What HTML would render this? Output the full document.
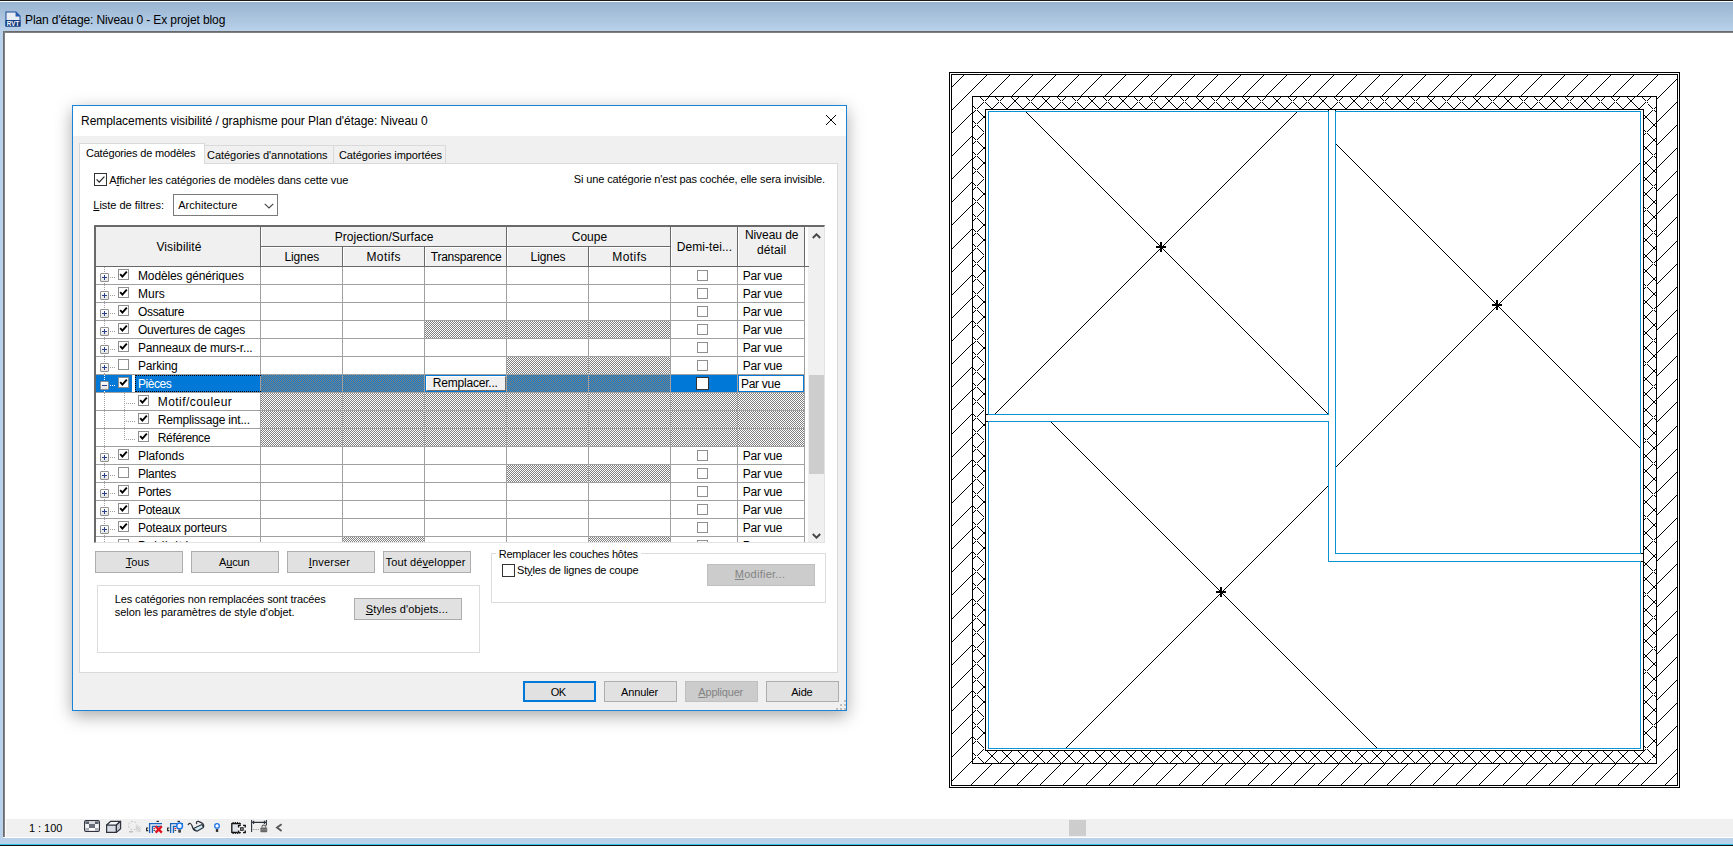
<!DOCTYPE html>
<html><head><meta charset="utf-8"><title>Revit</title>
<style>
html,body{margin:0;padding:0;}
body{width:1733px;height:848px;overflow:hidden;background:#fff;position:relative;font-family:'Liberation Sans',sans-serif;}
.a{position:absolute;box-sizing:border-box;}
.t{position:absolute;white-space:pre;}
.t u{text-decoration:underline;text-underline-offset:1px;text-decoration-thickness:1px;}
.hatch{background-image:conic-gradient(#808080 25%,#fff 0 50%,#808080 0 75%,#fff 0);background-size:2px 2px;}
.hatchb{background-image:conic-gradient(#8a8478 25%,#0078d7 0 50%,#8a8478 0 75%,#0078d7 0);background-size:2px 2px;}
.btn{position:absolute;box-sizing:border-box;background:#e1e1e1;border:1px solid #adadad;}
.btnd{position:absolute;box-sizing:border-box;background:#cccccc;border:1px solid #bfbfbf;}
</style></head><body>
<div class="a" style="left:0;top:0;width:1733px;height:1px;background:#1a1a1a"></div>
<div class="a" style="left:0;top:1px;width:1733px;height:1px;background:#fdfdfd"></div>
<div class="a" style="left:0;top:2px;width:1733px;height:29px;background:linear-gradient(#99b4d1,#b9d1ea)"></div>
<div class="a" style="left:0;top:31px;width:3px;height:813px;background:#b9d1ea"></div>
<div class="a" style="left:3px;top:31px;width:1730px;height:2px;background:linear-gradient(#5f5f5f,#8c8c8c)"></div>
<div class="a" style="left:3px;top:31px;width:2px;height:806px;background:linear-gradient(90deg,#606060,#8c8c8c)"></div>
<div class="a" style="left:6px;top:819px;width:1727px;height:18px;background:#f0f0f0"></div>
<div class="a" style="left:3px;top:837px;width:1730px;height:1px;background:#fff"></div>
<div class="a" style="left:0;top:838px;width:1733px;height:6px;background:#b9d1ea"></div>
<div class="a" style="left:0;top:844px;width:1733px;height:1px;background:#35c4e8"></div>
<div class="a" style="left:0;top:845px;width:1733px;height:1px;background:#111"></div>
<div class="a" style="left:1069px;top:820px;width:17px;height:16px;background:#cdcdcd"></div>
<svg class="a" style="left:5px;top:11px" width="16" height="16" viewBox="0 0 16 16">
<path d="M0.5 0.5 H11 L15.5 5 V15.5 H0.5 Z" fill="#1a4a94"/>
<path d="M1.5 1.5 H10.6 V5.6 H14.5 V9 H1.5 Z" fill="#e9eef6"/>
<path d="M11 0.5 L15.5 5 H11 Z" fill="#2a5db0"/>
<rect x="0.5" y="9.3" width="15" height="6.2" fill="#123a7c"/>
<text x="8" y="14.8" font-family="Liberation Sans" font-weight="bold" font-size="6.6" fill="#fff" text-anchor="middle" textLength="12.5" lengthAdjust="spacingAndGlyphs">RVT</text>
</svg>
<span class="t " style="left:25.00px;top:12px;font-size:12px;line-height:17px;letter-spacing:-0.108px;color:#000">Plan d&#x27;étage: Niveau 0 - Ex projet blog</span>
<span class="t " style="left:28.90px;top:821px;font-size:11px;line-height:15px;letter-spacing:-0.020px;color:#000">1 : 100</span>
<svg class="a" style="left:80px;top:817px" width="210" height="20" viewBox="80 817 210 20" fill="none">
<rect x="84.6" y="820.6" width="14.8" height="10.8" rx="1.4" fill="#fff" stroke="#2d323c" stroke-width="1.2"/>
<rect x="85.5" y="821.5" width="3.5" height="2.5" fill="#5a5f69"/>
<rect x="89" y="821.5" width="6" height="2.5" fill="#d9dbe0"/>
<rect x="95" y="821.5" width="3.5" height="2.5" fill="#5a5f69"/>
<rect x="85.5" y="824" width="3.5" height="4" fill="#f4f4f6"/>
<rect x="89" y="824" width="6" height="4" fill="#6a6f7a"/>
<rect x="95" y="824" width="3.5" height="4" fill="#f4f4f6"/>
<rect x="85.5" y="828" width="3.5" height="2.5" fill="#a9acb3"/>
<rect x="89" y="828" width="6" height="2.5" fill="#ffffff"/>
<rect x="95" y="828" width="3.5" height="2.5" fill="#a9acb3"/>
<path d="M106.6 825H116.4V832.4H106.6Z" fill="#d9dde5" stroke="#2d323c" stroke-width="1.2" stroke-linejoin="round"/>
<path d="M106.6 825L110.8 821.3H120.6L116.4 825Z" fill="#f6f7f9" stroke="#2d323c" stroke-width="1.2" stroke-linejoin="round"/>
<path d="M116.4 825L120.6 821.3V828.8L116.4 832.4Z" fill="#c3c8d3" stroke="#2d323c" stroke-width="1.2" stroke-linejoin="round"/>
<circle cx="132.8" cy="825.6" r="4.3" stroke="#c4c4c4" stroke-width="1" stroke-dasharray="2 1.6"/>
<path d="M135.5 826.5L141 832M141 826.5L135.5 832M137 826L141 830M136 828L140 832M139.5 826L135.5 830M141 828.5L137.5 832" stroke="#cfcfcf" stroke-width="0.9"/>
<rect x="129" y="831" width="4" height="1.5" fill="#c0c0c0"/>
<path d="M149.6 833V823.6H162M152.4 833V826.4H162" stroke="#1565c0" stroke-width="1.3"/><path d="M148.2 828H146.6V830.6H148.2" stroke="#222" stroke-width="1.1"/><path d="M156.5 821.4H159" stroke="#222" stroke-width="1.1"/><path d="M153.4 828.4H155.2" stroke="#e81123" stroke-width="1.1"/><path d="M153.4 830.4H155.2" stroke="#444" stroke-width="1.1"/>
<path d="M155.6 826.2L161.8 832.6M161.8 826.2L155.6 832.6" stroke="#e0101c" stroke-width="2.3"/>
<path d="M170.6 833V823.6H183M173.4 833V826.4H183" stroke="#1565c0" stroke-width="1.3"/><path d="M169.2 828H167.6V830.6H169.2" stroke="#222" stroke-width="1.1"/><path d="M177.5 821.4H180" stroke="#222" stroke-width="1.1"/><path d="M174.4 828.4H176.2" stroke="#e81123" stroke-width="1.1"/><path d="M174.4 830.4H176.2" stroke="#444" stroke-width="1.1"/>
<circle cx="179.6" cy="825.9" r="2.9" fill="#eef4ff" stroke="#1a73e8" stroke-width="1.4"/>
<rect x="178.2" y="829.4" width="2.8" height="3.4" rx="0.8" fill="#444"/>
<path d="M193.2 828.8L197 831.3L203.4 827.6L202 824.6L197.6 826.6Z" fill="#cfe9f6" stroke="#2d323c" stroke-width="1.1" stroke-linejoin="round"/>
<path d="M188.2 824.6C189.6 822.6 191.2 823.2 192 825.8C192.8 828.6 193.6 830.2 195.4 830.8M196.8 823.6C195.8 822.4 196.6 821.2 198.4 821.4L201.2 822.6C203 823.6 204 825.4 203.6 827" stroke="#2d323c" stroke-width="1.2" stroke-linecap="round"/>
<circle cx="217" cy="825.9" r="2.3" fill="#fff" stroke="#1a73e8" stroke-width="1.3"/>
<rect x="215.8" y="829" width="2.5" height="3" rx="0.7" fill="#333"/>
<rect x="231.8" y="823.6" width="8.4" height="8.8" fill="#dfe2e8" stroke="#111" stroke-width="1.3"/>
<path d="M232.5 822.6H239.5M232.5 833.4H239.5" stroke="#111" stroke-width="1.2" stroke-dasharray="1.2 1"/>
<rect x="237.8" y="824.6" width="8" height="8.6" fill="#f0f0f0"/>
<path d="M238.6 827.4V825.4H240.8M243 825.4H245.2V827.4M245.2 830.4V832.6H243M240.8 832.6H238.6V830.4" stroke="#111" stroke-width="1.4" fill="none"/>
<rect x="240.7" y="827.8" width="2.4" height="2.4" fill="#fff" stroke="#111" stroke-width="1.1"/>
<path d="M251.6 820V832M266.4 820V825.4M251.6 822.4H266.4M253.6 820.8V824M264.4 820.8V824" stroke="#2d323c" stroke-width="1.1"/>
<path d="M253 829.5H259" stroke="#9a9a9a" stroke-width="1" stroke-dasharray="1.4 1"/>
<rect x="260.4" y="827.6" width="6.8" height="4.6" rx="0.8" fill="#666"/>
<path d="M262 827.6V826.6C262 824.6 265.6 824.6 265.6 826.6V827.6" stroke="#666" stroke-width="1.1"/>
<path d="M260.4 829.8H267.2" stroke="#999" stroke-width="0.7"/>
<path d="M281.6 824.2L277 827.6L281.6 831" stroke="#585858" stroke-width="1.9"/>
</svg>
<svg class="a" style="left:0;top:0" width="1733" height="848" viewBox="0 0 1733 848" shape-rendering="crispEdges" fill="none">
<path d="M950.50 87.60L951.50 87.60L965.10 74.00L964.10 74.00ZM950.50 110.73L951.50 110.73L988.23 74.00L987.23 74.00ZM950.50 133.86L951.50 133.86L972.50 112.86L971.50 112.86ZM988.36 96.00L989.36 96.00L1011.36 74.00L1010.36 74.00ZM950.50 156.99L951.50 156.99L972.50 135.99L971.50 135.99ZM1011.49 96.00L1012.49 96.00L1034.49 74.00L1033.49 74.00ZM950.50 180.12L951.50 180.12L972.50 159.12L971.50 159.12ZM1034.62 96.00L1035.62 96.00L1057.62 74.00L1056.62 74.00ZM950.50 203.25L951.50 203.25L972.50 182.25L971.50 182.25ZM1057.75 96.00L1058.75 96.00L1080.75 74.00L1079.75 74.00ZM950.50 226.38L951.50 226.38L972.50 205.38L971.50 205.38ZM1080.88 96.00L1081.88 96.00L1103.88 74.00L1102.88 74.00ZM950.50 249.51L951.50 249.51L972.50 228.51L971.50 228.51ZM1104.01 96.00L1105.01 96.00L1127.01 74.00L1126.01 74.00ZM950.50 272.64L951.50 272.64L972.50 251.64L971.50 251.64ZM1127.14 96.00L1128.14 96.00L1150.14 74.00L1149.14 74.00ZM950.50 295.77L951.50 295.77L972.50 274.77L971.50 274.77ZM1150.27 96.00L1151.27 96.00L1173.27 74.00L1172.27 74.00ZM950.50 318.90L951.50 318.90L972.50 297.90L971.50 297.90ZM1173.40 96.00L1174.40 96.00L1196.40 74.00L1195.40 74.00ZM950.50 342.03L951.50 342.03L972.50 321.03L971.50 321.03ZM1196.53 96.00L1197.53 96.00L1219.53 74.00L1218.53 74.00ZM950.50 365.16L951.50 365.16L972.50 344.16L971.50 344.16ZM1219.66 96.00L1220.66 96.00L1242.66 74.00L1241.66 74.00ZM950.50 388.29L951.50 388.29L972.50 367.29L971.50 367.29ZM1242.79 96.00L1243.79 96.00L1265.79 74.00L1264.79 74.00ZM950.50 411.42L951.50 411.42L972.50 390.42L971.50 390.42ZM1265.92 96.00L1266.92 96.00L1288.92 74.00L1287.92 74.00ZM950.50 434.55L951.50 434.55L972.50 413.55L971.50 413.55ZM1289.05 96.00L1290.05 96.00L1312.05 74.00L1311.05 74.00ZM950.50 457.68L951.50 457.68L972.50 436.68L971.50 436.68ZM1312.18 96.00L1313.18 96.00L1335.18 74.00L1334.18 74.00ZM950.50 480.81L951.50 480.81L972.50 459.81L971.50 459.81ZM1335.31 96.00L1336.31 96.00L1358.31 74.00L1357.31 74.00ZM950.50 503.94L951.50 503.94L972.50 482.94L971.50 482.94ZM1358.44 96.00L1359.44 96.00L1381.44 74.00L1380.44 74.00ZM950.50 527.07L951.50 527.07L972.50 506.07L971.50 506.07ZM1381.57 96.00L1382.57 96.00L1404.57 74.00L1403.57 74.00ZM950.50 550.20L951.50 550.20L972.50 529.20L971.50 529.20ZM1404.70 96.00L1405.70 96.00L1427.70 74.00L1426.70 74.00ZM950.50 573.33L951.50 573.33L972.50 552.33L971.50 552.33ZM1427.83 96.00L1428.83 96.00L1450.83 74.00L1449.83 74.00ZM950.50 596.46L951.50 596.46L972.50 575.46L971.50 575.46ZM1450.96 96.00L1451.96 96.00L1473.96 74.00L1472.96 74.00ZM950.50 619.59L951.50 619.59L972.50 598.59L971.50 598.59ZM1474.09 96.00L1475.09 96.00L1497.09 74.00L1496.09 74.00ZM950.50 642.72L951.50 642.72L972.50 621.72L971.50 621.72ZM1497.22 96.00L1498.22 96.00L1520.22 74.00L1519.22 74.00ZM950.50 665.85L951.50 665.85L972.50 644.85L971.50 644.85ZM1520.35 96.00L1521.35 96.00L1543.35 74.00L1542.35 74.00ZM950.50 688.98L951.50 688.98L972.50 667.98L971.50 667.98ZM1543.48 96.00L1544.48 96.00L1566.48 74.00L1565.48 74.00ZM950.50 712.11L951.50 712.11L972.50 691.11L971.50 691.11ZM1566.61 96.00L1567.61 96.00L1589.61 74.00L1588.61 74.00ZM950.50 735.24L951.50 735.24L972.50 714.24L971.50 714.24ZM1589.74 96.00L1590.74 96.00L1612.74 74.00L1611.74 74.00ZM950.50 758.37L951.50 758.37L972.50 737.37L971.50 737.37ZM1612.87 96.00L1613.87 96.00L1635.87 74.00L1634.87 74.00ZM950.50 781.50L951.50 781.50L972.50 760.50L971.50 760.50ZM1636.00 96.00L1637.00 96.00L1659.00 74.00L1658.00 74.00ZM970.13 785.00L971.13 785.00L993.13 763.00L992.13 763.00ZM1655.50 99.63L1656.50 99.63L1677.50 78.63L1676.50 78.63ZM993.26 785.00L994.26 785.00L1016.26 763.00L1015.26 763.00ZM1655.50 122.76L1656.50 122.76L1677.50 101.76L1676.50 101.76ZM1016.39 785.00L1017.39 785.00L1039.39 763.00L1038.39 763.00ZM1655.50 145.89L1656.50 145.89L1677.50 124.89L1676.50 124.89ZM1039.52 785.00L1040.52 785.00L1062.52 763.00L1061.52 763.00ZM1655.50 169.02L1656.50 169.02L1677.50 148.02L1676.50 148.02ZM1062.65 785.00L1063.65 785.00L1085.65 763.00L1084.65 763.00ZM1655.50 192.15L1656.50 192.15L1677.50 171.15L1676.50 171.15ZM1085.78 785.00L1086.78 785.00L1108.78 763.00L1107.78 763.00ZM1655.50 215.28L1656.50 215.28L1677.50 194.28L1676.50 194.28ZM1108.91 785.00L1109.91 785.00L1131.91 763.00L1130.91 763.00ZM1655.50 238.41L1656.50 238.41L1677.50 217.41L1676.50 217.41ZM1132.04 785.00L1133.04 785.00L1155.04 763.00L1154.04 763.00ZM1655.50 261.54L1656.50 261.54L1677.50 240.54L1676.50 240.54ZM1155.17 785.00L1156.17 785.00L1178.17 763.00L1177.17 763.00ZM1655.50 284.67L1656.50 284.67L1677.50 263.67L1676.50 263.67ZM1178.30 785.00L1179.30 785.00L1201.30 763.00L1200.30 763.00ZM1655.50 307.80L1656.50 307.80L1677.50 286.80L1676.50 286.80ZM1201.43 785.00L1202.43 785.00L1224.43 763.00L1223.43 763.00ZM1655.50 330.93L1656.50 330.93L1677.50 309.93L1676.50 309.93ZM1224.56 785.00L1225.56 785.00L1247.56 763.00L1246.56 763.00ZM1655.50 354.06L1656.50 354.06L1677.50 333.06L1676.50 333.06ZM1247.69 785.00L1248.69 785.00L1270.69 763.00L1269.69 763.00ZM1655.50 377.19L1656.50 377.19L1677.50 356.19L1676.50 356.19ZM1270.82 785.00L1271.82 785.00L1293.82 763.00L1292.82 763.00ZM1655.50 400.32L1656.50 400.32L1677.50 379.32L1676.50 379.32ZM1293.95 785.00L1294.95 785.00L1316.95 763.00L1315.95 763.00ZM1655.50 423.45L1656.50 423.45L1677.50 402.45L1676.50 402.45ZM1317.08 785.00L1318.08 785.00L1340.08 763.00L1339.08 763.00ZM1655.50 446.58L1656.50 446.58L1677.50 425.58L1676.50 425.58ZM1340.21 785.00L1341.21 785.00L1363.21 763.00L1362.21 763.00ZM1655.50 469.71L1656.50 469.71L1677.50 448.71L1676.50 448.71ZM1363.34 785.00L1364.34 785.00L1386.34 763.00L1385.34 763.00ZM1655.50 492.84L1656.50 492.84L1677.50 471.84L1676.50 471.84ZM1386.47 785.00L1387.47 785.00L1409.47 763.00L1408.47 763.00ZM1655.50 515.97L1656.50 515.97L1677.50 494.97L1676.50 494.97ZM1409.60 785.00L1410.60 785.00L1432.60 763.00L1431.60 763.00ZM1655.50 539.10L1656.50 539.10L1677.50 518.10L1676.50 518.10ZM1432.73 785.00L1433.73 785.00L1455.73 763.00L1454.73 763.00ZM1655.50 562.23L1656.50 562.23L1677.50 541.23L1676.50 541.23ZM1455.86 785.00L1456.86 785.00L1478.86 763.00L1477.86 763.00ZM1655.50 585.36L1656.50 585.36L1677.50 564.36L1676.50 564.36ZM1478.99 785.00L1479.99 785.00L1501.99 763.00L1500.99 763.00ZM1655.50 608.49L1656.50 608.49L1677.50 587.49L1676.50 587.49ZM1502.12 785.00L1503.12 785.00L1525.12 763.00L1524.12 763.00ZM1655.50 631.62L1656.50 631.62L1677.50 610.62L1676.50 610.62ZM1525.25 785.00L1526.25 785.00L1548.25 763.00L1547.25 763.00ZM1655.50 654.75L1656.50 654.75L1677.50 633.75L1676.50 633.75ZM1548.38 785.00L1549.38 785.00L1571.38 763.00L1570.38 763.00ZM1655.50 677.88L1656.50 677.88L1677.50 656.88L1676.50 656.88ZM1571.51 785.00L1572.51 785.00L1594.51 763.00L1593.51 763.00ZM1655.50 701.01L1656.50 701.01L1677.50 680.01L1676.50 680.01ZM1594.64 785.00L1595.64 785.00L1617.64 763.00L1616.64 763.00ZM1655.50 724.14L1656.50 724.14L1677.50 703.14L1676.50 703.14ZM1617.77 785.00L1618.77 785.00L1640.77 763.00L1639.77 763.00ZM1655.50 747.27L1656.50 747.27L1677.50 726.27L1676.50 726.27ZM1640.90 785.00L1641.90 785.00L1677.50 749.40L1676.50 749.40ZM1664.03 785.00L1665.03 785.00L1677.50 772.53L1676.50 772.53ZM978.50 96.00L979.50 96.00L992.50 109.00L991.50 109.00ZM993.90 96.00L994.90 96.00L1007.90 109.00L1006.90 109.00ZM1009.30 96.00L1010.30 96.00L1023.30 109.00L1022.30 109.00ZM1024.70 96.00L1025.70 96.00L1038.70 109.00L1037.70 109.00ZM1040.10 96.00L1041.10 96.00L1054.10 109.00L1053.10 109.00ZM1055.50 96.00L1056.50 96.00L1069.50 109.00L1068.50 109.00ZM1070.90 96.00L1071.90 96.00L1084.90 109.00L1083.90 109.00ZM1086.30 96.00L1087.30 96.00L1100.30 109.00L1099.30 109.00ZM1101.70 96.00L1102.70 96.00L1115.70 109.00L1114.70 109.00ZM1117.10 96.00L1118.10 96.00L1131.10 109.00L1130.10 109.00ZM1132.50 96.00L1133.50 96.00L1146.50 109.00L1145.50 109.00ZM1147.90 96.00L1148.90 96.00L1161.90 109.00L1160.90 109.00ZM1163.30 96.00L1164.30 96.00L1177.30 109.00L1176.30 109.00ZM1178.70 96.00L1179.70 96.00L1192.70 109.00L1191.70 109.00ZM1194.10 96.00L1195.10 96.00L1208.10 109.00L1207.10 109.00ZM1209.50 96.00L1210.50 96.00L1223.50 109.00L1222.50 109.00ZM1224.90 96.00L1225.90 96.00L1238.90 109.00L1237.90 109.00ZM1240.30 96.00L1241.30 96.00L1254.30 109.00L1253.30 109.00ZM1255.70 96.00L1256.70 96.00L1269.70 109.00L1268.70 109.00ZM1271.10 96.00L1272.10 96.00L1285.10 109.00L1284.10 109.00ZM1286.50 96.00L1287.50 96.00L1300.50 109.00L1299.50 109.00ZM1301.90 96.00L1302.90 96.00L1315.90 109.00L1314.90 109.00ZM1317.30 96.00L1318.30 96.00L1331.30 109.00L1330.30 109.00ZM1332.70 96.00L1333.70 96.00L1346.70 109.00L1345.70 109.00ZM1348.10 96.00L1349.10 96.00L1362.10 109.00L1361.10 109.00ZM1363.50 96.00L1364.50 96.00L1377.50 109.00L1376.50 109.00ZM1378.90 96.00L1379.90 96.00L1392.90 109.00L1391.90 109.00ZM1394.30 96.00L1395.30 96.00L1408.30 109.00L1407.30 109.00ZM1409.70 96.00L1410.70 96.00L1423.70 109.00L1422.70 109.00ZM1425.10 96.00L1426.10 96.00L1439.10 109.00L1438.10 109.00ZM1440.50 96.00L1441.50 96.00L1454.50 109.00L1453.50 109.00ZM1455.90 96.00L1456.90 96.00L1469.90 109.00L1468.90 109.00ZM1471.30 96.00L1472.30 96.00L1485.30 109.00L1484.30 109.00ZM1486.70 96.00L1487.70 96.00L1500.70 109.00L1499.70 109.00ZM1502.10 96.00L1503.10 96.00L1516.10 109.00L1515.10 109.00ZM1517.50 96.00L1518.50 96.00L1531.50 109.00L1530.50 109.00ZM1532.90 96.00L1533.90 96.00L1546.90 109.00L1545.90 109.00ZM1548.30 96.00L1549.30 96.00L1562.30 109.00L1561.30 109.00ZM1563.70 96.00L1564.70 96.00L1577.70 109.00L1576.70 109.00ZM1579.10 96.00L1580.10 96.00L1593.10 109.00L1592.10 109.00ZM1594.50 96.00L1595.50 96.00L1608.50 109.00L1607.50 109.00ZM1609.90 96.00L1610.90 96.00L1623.90 109.00L1622.90 109.00ZM1625.30 96.00L1626.30 96.00L1639.30 109.00L1638.30 109.00ZM1640.70 96.00L1641.70 96.00L1649.10 103.40L1648.10 103.40ZM972.60 97.10L973.60 97.10L974.70 96.00L973.70 96.00ZM980.30 104.80L981.30 104.80L990.10 96.00L989.10 96.00ZM991.50 109.00L992.50 109.00L1005.50 96.00L1004.50 96.00ZM1006.90 109.00L1007.90 109.00L1020.90 96.00L1019.90 96.00ZM1022.30 109.00L1023.30 109.00L1036.30 96.00L1035.30 96.00ZM1037.70 109.00L1038.70 109.00L1051.70 96.00L1050.70 96.00ZM1053.10 109.00L1054.10 109.00L1067.10 96.00L1066.10 96.00ZM1068.50 109.00L1069.50 109.00L1082.50 96.00L1081.50 96.00ZM1083.90 109.00L1084.90 109.00L1097.90 96.00L1096.90 96.00ZM1099.30 109.00L1100.30 109.00L1113.30 96.00L1112.30 96.00ZM1114.70 109.00L1115.70 109.00L1128.70 96.00L1127.70 96.00ZM1130.10 109.00L1131.10 109.00L1144.10 96.00L1143.10 96.00ZM1145.50 109.00L1146.50 109.00L1159.50 96.00L1158.50 96.00ZM1160.90 109.00L1161.90 109.00L1174.90 96.00L1173.90 96.00ZM1176.30 109.00L1177.30 109.00L1190.30 96.00L1189.30 96.00ZM1191.70 109.00L1192.70 109.00L1205.70 96.00L1204.70 96.00ZM1207.10 109.00L1208.10 109.00L1221.10 96.00L1220.10 96.00ZM1222.50 109.00L1223.50 109.00L1236.50 96.00L1235.50 96.00ZM1237.90 109.00L1238.90 109.00L1251.90 96.00L1250.90 96.00ZM1253.30 109.00L1254.30 109.00L1267.30 96.00L1266.30 96.00ZM1268.70 109.00L1269.70 109.00L1282.70 96.00L1281.70 96.00ZM1284.10 109.00L1285.10 109.00L1298.10 96.00L1297.10 96.00ZM1299.50 109.00L1300.50 109.00L1313.50 96.00L1312.50 96.00ZM1314.90 109.00L1315.90 109.00L1328.90 96.00L1327.90 96.00ZM1330.30 109.00L1331.30 109.00L1344.30 96.00L1343.30 96.00ZM1345.70 109.00L1346.70 109.00L1359.70 96.00L1358.70 96.00ZM1361.10 109.00L1362.10 109.00L1375.10 96.00L1374.10 96.00ZM1376.50 109.00L1377.50 109.00L1390.50 96.00L1389.50 96.00ZM1391.90 109.00L1392.90 109.00L1405.90 96.00L1404.90 96.00ZM1407.30 109.00L1408.30 109.00L1421.30 96.00L1420.30 96.00ZM1422.70 109.00L1423.70 109.00L1436.70 96.00L1435.70 96.00ZM1438.10 109.00L1439.10 109.00L1452.10 96.00L1451.10 96.00ZM1453.50 109.00L1454.50 109.00L1467.50 96.00L1466.50 96.00ZM1468.90 109.00L1469.90 109.00L1482.90 96.00L1481.90 96.00ZM1484.30 109.00L1485.30 109.00L1498.30 96.00L1497.30 96.00ZM1499.70 109.00L1500.70 109.00L1513.70 96.00L1512.70 96.00ZM1515.10 109.00L1516.10 109.00L1529.10 96.00L1528.10 96.00ZM1530.50 109.00L1531.50 109.00L1544.50 96.00L1543.50 96.00ZM1545.90 109.00L1546.90 109.00L1559.90 96.00L1558.90 96.00ZM1561.30 109.00L1562.30 109.00L1575.30 96.00L1574.30 96.00ZM1576.70 109.00L1577.70 109.00L1590.70 96.00L1589.70 96.00ZM1592.10 109.00L1593.10 109.00L1606.10 96.00L1605.10 96.00ZM1607.50 109.00L1608.50 109.00L1621.50 96.00L1620.50 96.00ZM1622.90 109.00L1623.90 109.00L1636.90 96.00L1635.90 96.00ZM1638.30 109.00L1639.30 109.00L1652.30 96.00L1651.30 96.00ZM977.30 757.20L978.30 757.20L984.10 763.00L983.10 763.00ZM985.50 750.00L986.50 750.00L999.50 763.00L998.50 763.00ZM1000.90 750.00L1001.90 750.00L1014.90 763.00L1013.90 763.00ZM1016.30 750.00L1017.30 750.00L1030.30 763.00L1029.30 763.00ZM1031.70 750.00L1032.70 750.00L1045.70 763.00L1044.70 763.00ZM1047.10 750.00L1048.10 750.00L1061.10 763.00L1060.10 763.00ZM1062.50 750.00L1063.50 750.00L1076.50 763.00L1075.50 763.00ZM1077.90 750.00L1078.90 750.00L1091.90 763.00L1090.90 763.00ZM1093.30 750.00L1094.30 750.00L1107.30 763.00L1106.30 763.00ZM1108.70 750.00L1109.70 750.00L1122.70 763.00L1121.70 763.00ZM1124.10 750.00L1125.10 750.00L1138.10 763.00L1137.10 763.00ZM1139.50 750.00L1140.50 750.00L1153.50 763.00L1152.50 763.00ZM1154.90 750.00L1155.90 750.00L1168.90 763.00L1167.90 763.00ZM1170.30 750.00L1171.30 750.00L1184.30 763.00L1183.30 763.00ZM1185.70 750.00L1186.70 750.00L1199.70 763.00L1198.70 763.00ZM1201.10 750.00L1202.10 750.00L1215.10 763.00L1214.10 763.00ZM1216.50 750.00L1217.50 750.00L1230.50 763.00L1229.50 763.00ZM1231.90 750.00L1232.90 750.00L1245.90 763.00L1244.90 763.00ZM1247.30 750.00L1248.30 750.00L1261.30 763.00L1260.30 763.00ZM1262.70 750.00L1263.70 750.00L1276.70 763.00L1275.70 763.00ZM1278.10 750.00L1279.10 750.00L1292.10 763.00L1291.10 763.00ZM1293.50 750.00L1294.50 750.00L1307.50 763.00L1306.50 763.00ZM1308.90 750.00L1309.90 750.00L1322.90 763.00L1321.90 763.00ZM1324.30 750.00L1325.30 750.00L1338.30 763.00L1337.30 763.00ZM1339.70 750.00L1340.70 750.00L1353.70 763.00L1352.70 763.00ZM1355.10 750.00L1356.10 750.00L1369.10 763.00L1368.10 763.00ZM1370.50 750.00L1371.50 750.00L1384.50 763.00L1383.50 763.00ZM1385.90 750.00L1386.90 750.00L1399.90 763.00L1398.90 763.00ZM1401.30 750.00L1402.30 750.00L1415.30 763.00L1414.30 763.00ZM1416.70 750.00L1417.70 750.00L1430.70 763.00L1429.70 763.00ZM1432.10 750.00L1433.10 750.00L1446.10 763.00L1445.10 763.00ZM1447.50 750.00L1448.50 750.00L1461.50 763.00L1460.50 763.00ZM1462.90 750.00L1463.90 750.00L1476.90 763.00L1475.90 763.00ZM1478.30 750.00L1479.30 750.00L1492.30 763.00L1491.30 763.00ZM1493.70 750.00L1494.70 750.00L1507.70 763.00L1506.70 763.00ZM1509.10 750.00L1510.10 750.00L1523.10 763.00L1522.10 763.00ZM1524.50 750.00L1525.50 750.00L1538.50 763.00L1537.50 763.00ZM1539.90 750.00L1540.90 750.00L1553.90 763.00L1552.90 763.00ZM1555.30 750.00L1556.30 750.00L1569.30 763.00L1568.30 763.00ZM1570.70 750.00L1571.70 750.00L1584.70 763.00L1583.70 763.00ZM1586.10 750.00L1587.10 750.00L1600.10 763.00L1599.10 763.00ZM1601.50 750.00L1602.50 750.00L1615.50 763.00L1614.50 763.00ZM1616.90 750.00L1617.90 750.00L1630.90 763.00L1629.90 763.00ZM1632.30 750.00L1633.30 750.00L1646.30 763.00L1645.30 763.00ZM984.50 763.00L985.50 763.00L998.50 750.00L997.50 750.00ZM999.90 763.00L1000.90 763.00L1013.90 750.00L1012.90 750.00ZM1015.30 763.00L1016.30 763.00L1029.30 750.00L1028.30 750.00ZM1030.70 763.00L1031.70 763.00L1044.70 750.00L1043.70 750.00ZM1046.10 763.00L1047.10 763.00L1060.10 750.00L1059.10 750.00ZM1061.50 763.00L1062.50 763.00L1075.50 750.00L1074.50 750.00ZM1076.90 763.00L1077.90 763.00L1090.90 750.00L1089.90 750.00ZM1092.30 763.00L1093.30 763.00L1106.30 750.00L1105.30 750.00ZM1107.70 763.00L1108.70 763.00L1121.70 750.00L1120.70 750.00ZM1123.10 763.00L1124.10 763.00L1137.10 750.00L1136.10 750.00ZM1138.50 763.00L1139.50 763.00L1152.50 750.00L1151.50 750.00ZM1153.90 763.00L1154.90 763.00L1167.90 750.00L1166.90 750.00ZM1169.30 763.00L1170.30 763.00L1183.30 750.00L1182.30 750.00ZM1184.70 763.00L1185.70 763.00L1198.70 750.00L1197.70 750.00ZM1200.10 763.00L1201.10 763.00L1214.10 750.00L1213.10 750.00ZM1215.50 763.00L1216.50 763.00L1229.50 750.00L1228.50 750.00ZM1230.90 763.00L1231.90 763.00L1244.90 750.00L1243.90 750.00ZM1246.30 763.00L1247.30 763.00L1260.30 750.00L1259.30 750.00ZM1261.70 763.00L1262.70 763.00L1275.70 750.00L1274.70 750.00ZM1277.10 763.00L1278.10 763.00L1291.10 750.00L1290.10 750.00ZM1292.50 763.00L1293.50 763.00L1306.50 750.00L1305.50 750.00ZM1307.90 763.00L1308.90 763.00L1321.90 750.00L1320.90 750.00ZM1323.30 763.00L1324.30 763.00L1337.30 750.00L1336.30 750.00ZM1338.70 763.00L1339.70 763.00L1352.70 750.00L1351.70 750.00ZM1354.10 763.00L1355.10 763.00L1368.10 750.00L1367.10 750.00ZM1369.50 763.00L1370.50 763.00L1383.50 750.00L1382.50 750.00ZM1384.90 763.00L1385.90 763.00L1398.90 750.00L1397.90 750.00ZM1400.30 763.00L1401.30 763.00L1414.30 750.00L1413.30 750.00ZM1415.70 763.00L1416.70 763.00L1429.70 750.00L1428.70 750.00ZM1431.10 763.00L1432.10 763.00L1445.10 750.00L1444.10 750.00ZM1446.50 763.00L1447.50 763.00L1460.50 750.00L1459.50 750.00ZM1461.90 763.00L1462.90 763.00L1475.90 750.00L1474.90 750.00ZM1477.30 763.00L1478.30 763.00L1491.30 750.00L1490.30 750.00ZM1492.70 763.00L1493.70 763.00L1506.70 750.00L1505.70 750.00ZM1508.10 763.00L1509.10 763.00L1522.10 750.00L1521.10 750.00ZM1523.50 763.00L1524.50 763.00L1537.50 750.00L1536.50 750.00ZM1538.90 763.00L1539.90 763.00L1552.90 750.00L1551.90 750.00ZM1554.30 763.00L1555.30 763.00L1568.30 750.00L1567.30 750.00ZM1569.70 763.00L1570.70 763.00L1583.70 750.00L1582.70 750.00ZM1585.10 763.00L1586.10 763.00L1599.10 750.00L1598.10 750.00ZM1600.50 763.00L1601.50 763.00L1614.50 750.00L1613.50 750.00ZM1615.90 763.00L1616.90 763.00L1629.90 750.00L1628.90 750.00ZM1631.30 763.00L1632.30 763.00L1644.40 750.90L1643.40 750.90ZM1646.70 763.00L1647.70 763.00L1652.10 758.60L1651.10 758.60ZM971.50 751.70L972.50 751.70L978.15 757.35L977.15 757.35ZM971.50 736.30L972.50 736.30L985.50 749.30L984.50 749.30ZM971.50 720.90L972.50 720.90L985.50 733.90L984.50 733.90ZM971.50 705.50L972.50 705.50L985.50 718.50L984.50 718.50ZM971.50 690.10L972.50 690.10L985.50 703.10L984.50 703.10ZM971.50 674.70L972.50 674.70L985.50 687.70L984.50 687.70ZM971.50 659.30L972.50 659.30L985.50 672.30L984.50 672.30ZM971.50 643.90L972.50 643.90L985.50 656.90L984.50 656.90ZM971.50 628.50L972.50 628.50L985.50 641.50L984.50 641.50ZM971.50 613.10L972.50 613.10L985.50 626.10L984.50 626.10ZM971.50 597.70L972.50 597.70L985.50 610.70L984.50 610.70ZM971.50 582.30L972.50 582.30L985.50 595.30L984.50 595.30ZM971.50 566.90L972.50 566.90L985.50 579.90L984.50 579.90ZM971.50 551.50L972.50 551.50L985.50 564.50L984.50 564.50ZM971.50 536.10L972.50 536.10L985.50 549.10L984.50 549.10ZM971.50 520.70L972.50 520.70L985.50 533.70L984.50 533.70ZM971.50 505.30L972.50 505.30L985.50 518.30L984.50 518.30ZM971.50 489.90L972.50 489.90L985.50 502.90L984.50 502.90ZM971.50 474.50L972.50 474.50L985.50 487.50L984.50 487.50ZM971.50 459.10L972.50 459.10L985.50 472.10L984.50 472.10ZM971.50 443.70L972.50 443.70L985.50 456.70L984.50 456.70ZM971.50 428.30L972.50 428.30L985.50 441.30L984.50 441.30ZM971.50 412.90L972.50 412.90L985.50 425.90L984.50 425.90ZM971.50 397.50L972.50 397.50L985.50 410.50L984.50 410.50ZM971.50 382.10L972.50 382.10L985.50 395.10L984.50 395.10ZM971.50 366.70L972.50 366.70L985.50 379.70L984.50 379.70ZM971.50 351.30L972.50 351.30L985.50 364.30L984.50 364.30ZM971.50 335.90L972.50 335.90L985.50 348.90L984.50 348.90ZM971.50 320.50L972.50 320.50L985.50 333.50L984.50 333.50ZM971.50 305.10L972.50 305.10L985.50 318.10L984.50 318.10ZM971.50 289.70L972.50 289.70L985.50 302.70L984.50 302.70ZM971.50 274.30L972.50 274.30L985.50 287.30L984.50 287.30ZM971.50 258.90L972.50 258.90L985.50 271.90L984.50 271.90ZM971.50 243.50L972.50 243.50L985.50 256.50L984.50 256.50ZM971.50 228.10L972.50 228.10L985.50 241.10L984.50 241.10ZM971.50 212.70L972.50 212.70L985.50 225.70L984.50 225.70ZM971.50 197.30L972.50 197.30L985.50 210.30L984.50 210.30ZM971.50 181.90L972.50 181.90L985.50 194.90L984.50 194.90ZM971.50 166.50L972.50 166.50L985.50 179.50L984.50 179.50ZM971.50 151.10L972.50 151.10L985.50 164.10L984.50 164.10ZM971.50 135.70L972.50 135.70L985.50 148.70L984.50 148.70ZM971.50 120.30L972.50 120.30L985.50 133.30L984.50 133.30ZM971.50 104.90L972.50 104.90L985.50 117.90L984.50 117.90ZM971.50 98.30L972.50 98.30L973.65 97.15L972.65 97.15ZM971.50 113.70L972.50 113.70L981.35 104.85L980.35 104.85ZM971.50 129.10L972.50 129.10L985.50 116.10L984.50 116.10ZM971.50 144.50L972.50 144.50L985.50 131.50L984.50 131.50ZM971.50 159.90L972.50 159.90L985.50 146.90L984.50 146.90ZM971.50 175.30L972.50 175.30L985.50 162.30L984.50 162.30ZM971.50 190.70L972.50 190.70L985.50 177.70L984.50 177.70ZM971.50 206.10L972.50 206.10L985.50 193.10L984.50 193.10ZM971.50 221.50L972.50 221.50L985.50 208.50L984.50 208.50ZM971.50 236.90L972.50 236.90L985.50 223.90L984.50 223.90ZM971.50 252.30L972.50 252.30L985.50 239.30L984.50 239.30ZM971.50 267.70L972.50 267.70L985.50 254.70L984.50 254.70ZM971.50 283.10L972.50 283.10L985.50 270.10L984.50 270.10ZM971.50 298.50L972.50 298.50L985.50 285.50L984.50 285.50ZM971.50 313.90L972.50 313.90L985.50 300.90L984.50 300.90ZM971.50 329.30L972.50 329.30L985.50 316.30L984.50 316.30ZM971.50 344.70L972.50 344.70L985.50 331.70L984.50 331.70ZM971.50 360.10L972.50 360.10L985.50 347.10L984.50 347.10ZM971.50 375.50L972.50 375.50L985.50 362.50L984.50 362.50ZM971.50 390.90L972.50 390.90L985.50 377.90L984.50 377.90ZM971.50 406.30L972.50 406.30L985.50 393.30L984.50 393.30ZM971.50 421.70L972.50 421.70L985.50 408.70L984.50 408.70ZM971.50 437.10L972.50 437.10L985.50 424.10L984.50 424.10ZM971.50 452.50L972.50 452.50L985.50 439.50L984.50 439.50ZM971.50 467.90L972.50 467.90L985.50 454.90L984.50 454.90ZM971.50 483.30L972.50 483.30L985.50 470.30L984.50 470.30ZM971.50 498.70L972.50 498.70L985.50 485.70L984.50 485.70ZM971.50 514.10L972.50 514.10L985.50 501.10L984.50 501.10ZM971.50 529.50L972.50 529.50L985.50 516.50L984.50 516.50ZM971.50 544.90L972.50 544.90L985.50 531.90L984.50 531.90ZM971.50 560.30L972.50 560.30L985.50 547.30L984.50 547.30ZM971.50 575.70L972.50 575.70L985.50 562.70L984.50 562.70ZM971.50 591.10L972.50 591.10L985.50 578.10L984.50 578.10ZM971.50 606.50L972.50 606.50L985.50 593.50L984.50 593.50ZM971.50 621.90L972.50 621.90L985.50 608.90L984.50 608.90ZM971.50 637.30L972.50 637.30L985.50 624.30L984.50 624.30ZM971.50 652.70L972.50 652.70L985.50 639.70L984.50 639.70ZM971.50 668.10L972.50 668.10L985.50 655.10L984.50 655.10ZM971.50 683.50L972.50 683.50L985.50 670.50L984.50 670.50ZM971.50 698.90L972.50 698.90L985.50 685.90L984.50 685.90ZM971.50 714.30L972.50 714.30L985.50 701.30L984.50 701.30ZM971.50 729.70L972.50 729.70L985.50 716.70L984.50 716.70ZM971.50 745.10L972.50 745.10L985.50 732.10L984.50 732.10ZM971.50 760.50L972.50 760.50L985.50 747.50L984.50 747.50ZM1642.50 745.50L1643.50 745.50L1656.50 758.50L1655.50 758.50ZM1642.50 730.10L1643.50 730.10L1656.50 743.10L1655.50 743.10ZM1642.50 714.70L1643.50 714.70L1656.50 727.70L1655.50 727.70ZM1642.50 699.30L1643.50 699.30L1656.50 712.30L1655.50 712.30ZM1642.50 683.90L1643.50 683.90L1656.50 696.90L1655.50 696.90ZM1642.50 668.50L1643.50 668.50L1656.50 681.50L1655.50 681.50ZM1642.50 653.10L1643.50 653.10L1656.50 666.10L1655.50 666.10ZM1642.50 637.70L1643.50 637.70L1656.50 650.70L1655.50 650.70ZM1642.50 622.30L1643.50 622.30L1656.50 635.30L1655.50 635.30ZM1642.50 606.90L1643.50 606.90L1656.50 619.90L1655.50 619.90ZM1642.50 591.50L1643.50 591.50L1656.50 604.50L1655.50 604.50ZM1642.50 576.10L1643.50 576.10L1656.50 589.10L1655.50 589.10ZM1642.50 560.70L1643.50 560.70L1656.50 573.70L1655.50 573.70ZM1642.50 545.30L1643.50 545.30L1656.50 558.30L1655.50 558.30ZM1642.50 529.90L1643.50 529.90L1656.50 542.90L1655.50 542.90ZM1642.50 514.50L1643.50 514.50L1656.50 527.50L1655.50 527.50ZM1642.50 499.10L1643.50 499.10L1656.50 512.10L1655.50 512.10ZM1642.50 483.70L1643.50 483.70L1656.50 496.70L1655.50 496.70ZM1642.50 468.30L1643.50 468.30L1656.50 481.30L1655.50 481.30ZM1642.50 452.90L1643.50 452.90L1656.50 465.90L1655.50 465.90ZM1642.50 437.50L1643.50 437.50L1656.50 450.50L1655.50 450.50ZM1642.50 422.10L1643.50 422.10L1656.50 435.10L1655.50 435.10ZM1642.50 406.70L1643.50 406.70L1656.50 419.70L1655.50 419.70ZM1642.50 391.30L1643.50 391.30L1656.50 404.30L1655.50 404.30ZM1642.50 375.90L1643.50 375.90L1656.50 388.90L1655.50 388.90ZM1642.50 360.50L1643.50 360.50L1656.50 373.50L1655.50 373.50ZM1642.50 345.10L1643.50 345.10L1656.50 358.10L1655.50 358.10ZM1642.50 329.70L1643.50 329.70L1656.50 342.70L1655.50 342.70ZM1642.50 314.30L1643.50 314.30L1656.50 327.30L1655.50 327.30ZM1642.50 298.90L1643.50 298.90L1656.50 311.90L1655.50 311.90ZM1642.50 283.50L1643.50 283.50L1656.50 296.50L1655.50 296.50ZM1642.50 268.10L1643.50 268.10L1656.50 281.10L1655.50 281.10ZM1642.50 252.70L1643.50 252.70L1656.50 265.70L1655.50 265.70ZM1642.50 237.30L1643.50 237.30L1656.50 250.30L1655.50 250.30ZM1642.50 221.90L1643.50 221.90L1656.50 234.90L1655.50 234.90ZM1642.50 206.50L1643.50 206.50L1656.50 219.50L1655.50 219.50ZM1642.50 191.10L1643.50 191.10L1656.50 204.10L1655.50 204.10ZM1642.50 175.70L1643.50 175.70L1656.50 188.70L1655.50 188.70ZM1642.50 160.30L1643.50 160.30L1656.50 173.30L1655.50 173.30ZM1642.50 144.90L1643.50 144.90L1656.50 157.90L1655.50 157.90ZM1642.50 129.50L1643.50 129.50L1656.50 142.50L1655.50 142.50ZM1642.50 114.10L1643.50 114.10L1656.50 127.10L1655.50 127.10ZM1647.65 103.85L1648.65 103.85L1656.50 111.70L1655.50 111.70ZM1655.35 96.15L1656.35 96.15L1656.50 96.30L1655.50 96.30ZM1642.50 120.10L1643.50 120.10L1656.50 107.10L1655.50 107.10ZM1642.50 135.50L1643.50 135.50L1656.50 122.50L1655.50 122.50ZM1642.50 150.90L1643.50 150.90L1656.50 137.90L1655.50 137.90ZM1642.50 166.30L1643.50 166.30L1656.50 153.30L1655.50 153.30ZM1642.50 181.70L1643.50 181.70L1656.50 168.70L1655.50 168.70ZM1642.50 197.10L1643.50 197.10L1656.50 184.10L1655.50 184.10ZM1642.50 212.50L1643.50 212.50L1656.50 199.50L1655.50 199.50ZM1642.50 227.90L1643.50 227.90L1656.50 214.90L1655.50 214.90ZM1642.50 243.30L1643.50 243.30L1656.50 230.30L1655.50 230.30ZM1642.50 258.70L1643.50 258.70L1656.50 245.70L1655.50 245.70ZM1642.50 274.10L1643.50 274.10L1656.50 261.10L1655.50 261.10ZM1642.50 289.50L1643.50 289.50L1656.50 276.50L1655.50 276.50ZM1642.50 304.90L1643.50 304.90L1656.50 291.90L1655.50 291.90ZM1642.50 320.30L1643.50 320.30L1656.50 307.30L1655.50 307.30ZM1642.50 335.70L1643.50 335.70L1656.50 322.70L1655.50 322.70ZM1642.50 351.10L1643.50 351.10L1656.50 338.10L1655.50 338.10ZM1642.50 366.50L1643.50 366.50L1656.50 353.50L1655.50 353.50ZM1642.50 381.90L1643.50 381.90L1656.50 368.90L1655.50 368.90ZM1642.50 397.30L1643.50 397.30L1656.50 384.30L1655.50 384.30ZM1642.50 412.70L1643.50 412.70L1656.50 399.70L1655.50 399.70ZM1642.50 428.10L1643.50 428.10L1656.50 415.10L1655.50 415.10ZM1642.50 443.50L1643.50 443.50L1656.50 430.50L1655.50 430.50ZM1642.50 458.90L1643.50 458.90L1656.50 445.90L1655.50 445.90ZM1642.50 474.30L1643.50 474.30L1656.50 461.30L1655.50 461.30ZM1642.50 489.70L1643.50 489.70L1656.50 476.70L1655.50 476.70ZM1642.50 505.10L1643.50 505.10L1656.50 492.10L1655.50 492.10ZM1642.50 520.50L1643.50 520.50L1656.50 507.50L1655.50 507.50ZM1642.50 535.90L1643.50 535.90L1656.50 522.90L1655.50 522.90ZM1642.50 551.30L1643.50 551.30L1656.50 538.30L1655.50 538.30ZM1642.50 566.70L1643.50 566.70L1656.50 553.70L1655.50 553.70ZM1642.50 582.10L1643.50 582.10L1656.50 569.10L1655.50 569.10ZM1642.50 597.50L1643.50 597.50L1656.50 584.50L1655.50 584.50ZM1642.50 612.90L1643.50 612.90L1656.50 599.90L1655.50 599.90ZM1642.50 628.30L1643.50 628.30L1656.50 615.30L1655.50 615.30ZM1642.50 643.70L1643.50 643.70L1656.50 630.70L1655.50 630.70ZM1642.50 659.10L1643.50 659.10L1656.50 646.10L1655.50 646.10ZM1642.50 674.50L1643.50 674.50L1656.50 661.50L1655.50 661.50ZM1642.50 689.90L1643.50 689.90L1656.50 676.90L1655.50 676.90ZM1642.50 705.30L1643.50 705.30L1656.50 692.30L1655.50 692.30ZM1642.50 720.70L1643.50 720.70L1656.50 707.70L1655.50 707.70ZM1642.50 736.10L1643.50 736.10L1656.50 723.10L1655.50 723.10ZM1643.25 750.75L1644.25 750.75L1656.50 738.50L1655.50 738.50ZM1650.95 758.45L1651.95 758.45L1656.50 753.90L1655.50 753.90Z" fill="#000" stroke="none"/>
<path d="M1025.00 111.50L1026.00 111.50L1329.00 414.50L1328.00 414.50ZM1297.00 111.50L1298.00 111.50L995.00 414.50L994.00 414.50ZM1335.00 143.50L1336.00 143.50L1641.00 448.50L1640.00 448.50ZM1640.00 162.50L1641.00 162.50L1336.00 467.50L1335.00 467.50ZM1050.00 421.50L1051.00 421.50L1378.00 748.50L1377.00 748.50ZM1328.00 485.50L1329.00 485.50L1066.00 748.50L1065.00 748.50Z" fill="#000" stroke="none"/>
<path d="M949.5 72.5H1679.5V787.5H949.5ZM951.5 74.5H1677.5V785.5H951.5ZM972.5 96.5H1656.5V763.5H972.5ZM985.5 109.5H1643.5V750.5H985.5Z" stroke="#000" stroke-width="1"/>
<path d="M1641 553.5H1643M1641 561.5H1643M986 414.5H988M986 421.5H988M1328.5 110V111M1335.5 110V111" stroke="#000" stroke-width="1"/>
<path d="M988.5 111.5H1328.5V414.5H988.5ZM1335.5 111.5H1640.5V553.5H1335.5ZM988.5 421.5H1328.5V561.5H1640.5V748.5H988.5Z" stroke="#0a93d0" stroke-width="1"/>
<rect x="1156" y="246" width="10" height="2" fill="#000"/><rect x="1160" y="242" width="2" height="10" fill="#000"/>
<rect x="1492" y="304" width="10" height="2" fill="#000"/><rect x="1496" y="300" width="2" height="10" fill="#000"/>
<rect x="1216" y="591" width="10" height="2" fill="#000"/><rect x="1220" y="587" width="2" height="10" fill="#000"/>
</svg>
<div class="a" style="left:72px;top:105px;width:775px;height:606px;background:#f0f0f0;border:1px solid #1883d7;box-shadow:0 5px 16px rgba(0,0,0,.34)"></div>
<div class="a" style="left:73px;top:106px;width:773px;height:30px;background:#fff"></div>
<span class="t " style="left:81.00px;top:113px;font-size:12px;line-height:17px;letter-spacing:-0.040px;color:#000">Remplacements visibilité / graphisme pour Plan d&#x27;étage: Niveau 0</span>
<svg class="a" style="left:825px;top:114px" width="12" height="12" viewBox="0 0 12 12"><path d="M1 1L11 11M11 1L1 11" stroke="#000" stroke-width="1" fill="none"/></svg>
<div class="a" style="left:79px;top:163px;width:759px;height:510px;background:#fff;border:1px solid #d9d9d9"></div>
<div class="a" style="left:204px;top:145px;width:130px;height:19px;background:#f0f0f0;border:1px solid #d9d9d9"></div>
<div class="a" style="left:333px;top:145px;width:113px;height:19px;background:#f0f0f0;border:1px solid #d9d9d9"></div>
<div class="a" style="left:79px;top:143px;width:126px;height:21px;background:#fff;border:1px solid #d9d9d9;border-bottom:none"></div>
<span class="t " style="left:85.90px;top:146px;font-size:11px;line-height:15px;letter-spacing:-0.173px;color:#000">Catégories de modèles</span>
<span class="t " style="left:207.00px;top:148px;font-size:11px;line-height:15px;letter-spacing:-0.032px;color:#000">Catégories d&#x27;annotations</span>
<span class="t " style="left:338.90px;top:148px;font-size:11px;line-height:15px;letter-spacing:-0.078px;color:#000">Catégories importées</span>
<div class="a" style="left:94px;top:173px;width:13px;height:13px;background:#fff;border:1px solid #333"></div>
<svg class="a" style="left:95px;top:174px" width="11" height="11" viewBox="0 0 11 11"><path d="M1.6 5.4 L4.2 8.2 L9.4 2.6" fill="none" stroke="#222" stroke-width="1.2"/></svg>
<span class="t " style="left:109.20px;top:173px;font-size:11px;line-height:15px;letter-spacing:-0.071px;color:#000">A<u>f</u>ficher les catégories de modèles dans cette vue</span>
<span class="t " style="left:573.80px;top:172px;font-size:11px;line-height:15px;letter-spacing:-0.120px;color:#000">Si une catégorie n&#x27;est pas cochée, elle sera invisible.</span>
<span class="t " style="left:93.30px;top:198px;font-size:11px;line-height:15px;letter-spacing:-0.013px;color:#000"><u>L</u>iste de filtres:</span>
<div class="a" style="left:173px;top:194px;width:105px;height:22px;background:#fff;border:1px solid #7a7a7a"></div>
<span class="t " style="left:178.20px;top:198px;font-size:11px;line-height:15px;letter-spacing:0.041px;color:#000">Architecture</span>
<svg class="a" style="left:264px;top:203px" width="10" height="6" viewBox="0 0 10 6"><path d="M0.7 0.8L5 5L9.3 0.8" stroke="#444" stroke-width="1.1" fill="none"/></svg>
<div class="a" style="left:94px;top:225px;width:731px;height:318px;overflow:hidden">
<div class="a" style="left:-94px;top:-225px;width:1px;height:1px">
<div class="a" style="left:96px;top:227px;width:729px;height:316px;background:#fff"></div>
<div class="a" style="left:96px;top:227px;width:709px;height:39px;background:#f0f0f0"></div>
<div class="a hatch" style="left:425px;top:321px;width:81px;height:17px;"></div>
<div class="a hatch" style="left:507px;top:321px;width:81px;height:17px;"></div>
<div class="a hatch" style="left:589px;top:321px;width:81px;height:17px;"></div>
<div class="a hatch" style="left:507px;top:357px;width:81px;height:17px;"></div>
<div class="a hatch" style="left:589px;top:357px;width:81px;height:17px;"></div>
<div class="a" style="left:96px;top:375px;width:709px;height:17px;background:#0078d7"></div>
<div class="a hatchb" style="left:261px;top:375px;width:81px;height:17px;"></div>
<div class="a hatchb" style="left:343px;top:375px;width:81px;height:17px;"></div>
<div class="a hatchb" style="left:507px;top:375px;width:81px;height:17px;"></div>
<div class="a hatchb" style="left:589px;top:375px;width:81px;height:17px;"></div>
<div class="a hatch" style="left:261px;top:393px;width:81px;height:17px;"></div>
<div class="a hatch" style="left:343px;top:393px;width:81px;height:17px;"></div>
<div class="a hatch" style="left:425px;top:393px;width:81px;height:17px;"></div>
<div class="a hatch" style="left:507px;top:393px;width:81px;height:17px;"></div>
<div class="a hatch" style="left:589px;top:393px;width:81px;height:17px;"></div>
<div class="a hatch" style="left:671px;top:393px;width:66px;height:17px;"></div>
<div class="a hatch" style="left:738px;top:393px;width:66px;height:17px;"></div>
<div class="a hatch" style="left:261px;top:411px;width:81px;height:17px;"></div>
<div class="a hatch" style="left:343px;top:411px;width:81px;height:17px;"></div>
<div class="a hatch" style="left:425px;top:411px;width:81px;height:17px;"></div>
<div class="a hatch" style="left:507px;top:411px;width:81px;height:17px;"></div>
<div class="a hatch" style="left:589px;top:411px;width:81px;height:17px;"></div>
<div class="a hatch" style="left:671px;top:411px;width:66px;height:17px;"></div>
<div class="a hatch" style="left:738px;top:411px;width:66px;height:17px;"></div>
<div class="a hatch" style="left:261px;top:429px;width:81px;height:17px;"></div>
<div class="a hatch" style="left:343px;top:429px;width:81px;height:17px;"></div>
<div class="a hatch" style="left:425px;top:429px;width:81px;height:17px;"></div>
<div class="a hatch" style="left:507px;top:429px;width:81px;height:17px;"></div>
<div class="a hatch" style="left:589px;top:429px;width:81px;height:17px;"></div>
<div class="a hatch" style="left:671px;top:429px;width:66px;height:17px;"></div>
<div class="a hatch" style="left:738px;top:429px;width:66px;height:17px;"></div>
<div class="a hatch" style="left:507px;top:465px;width:81px;height:17px;"></div>
<div class="a hatch" style="left:589px;top:465px;width:81px;height:17px;"></div>
<div class="a hatch" style="left:343px;top:537px;width:81px;height:17px;"></div>
<div class="a hatch" style="left:589px;top:537px;width:81px;height:17px;"></div>
<svg class="a" style="left:0;top:0" width="860" height="560" shape-rendering="crispEdges" fill="none">
<path d="M96 284.5H805 M96 302.5H805 M96 320.5H805 M96 338.5H805 M96 356.5H805 M96 374.5H805 M96 392.5H805 M96 410.5H805 M96 428.5H805 M96 446.5H805 M96 464.5H805 M96 482.5H805 M96 500.5H805 M96 518.5H805 M96 536.5H805 M96 554.5H805 M260.5 267V543 M342.5 267V543 M424.5 267V543 M506.5 267V543 M588.5 267V543 M670.5 267V543 M737.5 267V543 M804.5 267V543" stroke="#a0a0a0" stroke-width="1"/>
<path d="M261.5 227V266 M507.5 227V266 M671.5 227V266 M738.5 227V266 M805.5 227V266 M343.5 247V266 M425.5 247V266 M589.5 247V266 M261 247.5H671" stroke="#fff" stroke-width="1"/>
<path d="M260.5 227V267 M506.5 227V267 M670.5 227V267 M737.5 227V267 M804.5 227V267 M342.5 247V267 M424.5 247V267 M588.5 247V267 M261 246.5H671 M96 266.5H808" stroke="#696969" stroke-width="1"/>
<path d="M104.5 267V543" stroke="#a0a0a0" stroke-width="1" stroke-dasharray="1 1"/>
<path d="M124.5 393V440" stroke="#a0a0a0" stroke-width="1" stroke-dasharray="1 1"/>
<path d="M110 277.5H116 M110 295.5H116 M110 313.5H116 M110 331.5H116 M110 349.5H116 M110 367.5H116 M110 385.5H116 M126 403.5H135 M126 421.5H135 M126 439.5H135 M110 457.5H116 M110 475.5H116 M110 493.5H116 M110 511.5H116 M110 529.5H116 M110 547.5H116" stroke="#a0a0a0" stroke-width="1" stroke-dasharray="1 1"/>
<path d="M104.5 375V392M110 385.5H116" stroke="#fff" stroke-width="1" stroke-dasharray="1 1"/>
</svg>
<span class="t " style="left:156.40px;top:239px;font-size:12px;line-height:17px;letter-spacing:0.139px;color:#000">Visibilité</span>
<span class="t " style="left:334.80px;top:229px;font-size:12px;line-height:17px;letter-spacing:0.030px;color:#000">Projection/Surface</span>
<span class="t " style="left:571.80px;top:229px;font-size:12px;line-height:17px;letter-spacing:-0.015px;color:#000">Coupe</span>
<span class="t " style="left:284.40px;top:249px;font-size:12px;line-height:17px;letter-spacing:-0.096px;color:#000">Lignes</span>
<span class="t " style="left:366.40px;top:249px;font-size:12px;line-height:17px;letter-spacing:0.431px;color:#000">Motifs</span>
<span class="t " style="left:430.80px;top:249px;font-size:12px;line-height:17px;letter-spacing:-0.249px;color:#000">Transparence</span>
<span class="t " style="left:530.60px;top:249px;font-size:12px;line-height:17px;letter-spacing:-0.096px;color:#000">Lignes</span>
<span class="t " style="left:612.30px;top:249px;font-size:12px;line-height:17px;letter-spacing:0.431px;color:#000">Motifs</span>
<span class="t " style="left:676.80px;top:239px;font-size:12px;line-height:17px;letter-spacing:0.056px;color:#000">Demi-tei...</span>
<span class="t " style="left:744.90px;top:227px;font-size:12px;line-height:17px;letter-spacing:-0.061px;color:#000">Niveau de</span>
<span class="t " style="left:756.90px;top:242px;font-size:12px;line-height:17px;letter-spacing:0.135px;color:#000">détail</span>
<div class="a" style="left:100px;top:273px;width:9px;height:9px;background:linear-gradient(#fff,#e4e4e4);border:1px solid #919191;border-radius:1px"></div>
<svg class="a" style="left:100px;top:273px" width="9" height="9" shape-rendering="crispEdges"><path d="M2 4.5H7M4.5 2V7" stroke="#2b3f8f" stroke-width="1" fill="none"/></svg>
<div class="a" style="left:118px;top:269px;width:11px;height:11px;background:#fff;border:1px solid #8e8f8f"></div>
<svg class="a" style="left:119px;top:270px" width="9" height="9" viewBox="0 0 9 9"><path d="M1.2 4.2 L3.4 6.6 L7.8 1.6" fill="none" stroke="#000" stroke-width="1.9"/></svg>
<span class="t " style="left:138.00px;top:268px;font-size:12px;line-height:17px;letter-spacing:-0.127px;color:#000">Modèles génériques</span>
<div class="a" style="left:697px;top:270px;width:11px;height:11px;background:#fff;border:1px solid #8e8f8f"></div>
<span class="t " style="left:742.80px;top:268px;font-size:12px;line-height:17px;letter-spacing:-0.294px;color:#000">Par vue</span>
<div class="a" style="left:100px;top:291px;width:9px;height:9px;background:linear-gradient(#fff,#e4e4e4);border:1px solid #919191;border-radius:1px"></div>
<svg class="a" style="left:100px;top:291px" width="9" height="9" shape-rendering="crispEdges"><path d="M2 4.5H7M4.5 2V7" stroke="#2b3f8f" stroke-width="1" fill="none"/></svg>
<div class="a" style="left:118px;top:287px;width:11px;height:11px;background:#fff;border:1px solid #8e8f8f"></div>
<svg class="a" style="left:119px;top:288px" width="9" height="9" viewBox="0 0 9 9"><path d="M1.2 4.2 L3.4 6.6 L7.8 1.6" fill="none" stroke="#000" stroke-width="1.9"/></svg>
<span class="t " style="left:138.00px;top:286px;font-size:12px;line-height:17px;letter-spacing:0.032px;color:#000">Murs</span>
<div class="a" style="left:697px;top:288px;width:11px;height:11px;background:#fff;border:1px solid #8e8f8f"></div>
<span class="t " style="left:742.80px;top:286px;font-size:12px;line-height:17px;letter-spacing:-0.294px;color:#000">Par vue</span>
<div class="a" style="left:100px;top:309px;width:9px;height:9px;background:linear-gradient(#fff,#e4e4e4);border:1px solid #919191;border-radius:1px"></div>
<svg class="a" style="left:100px;top:309px" width="9" height="9" shape-rendering="crispEdges"><path d="M2 4.5H7M4.5 2V7" stroke="#2b3f8f" stroke-width="1" fill="none"/></svg>
<div class="a" style="left:118px;top:305px;width:11px;height:11px;background:#fff;border:1px solid #8e8f8f"></div>
<svg class="a" style="left:119px;top:306px" width="9" height="9" viewBox="0 0 9 9"><path d="M1.2 4.2 L3.4 6.6 L7.8 1.6" fill="none" stroke="#000" stroke-width="1.9"/></svg>
<span class="t " style="left:138.00px;top:304px;font-size:12px;line-height:17px;letter-spacing:-0.336px;color:#000">Ossature</span>
<div class="a" style="left:697px;top:306px;width:11px;height:11px;background:#fff;border:1px solid #8e8f8f"></div>
<span class="t " style="left:742.80px;top:304px;font-size:12px;line-height:17px;letter-spacing:-0.294px;color:#000">Par vue</span>
<div class="a" style="left:100px;top:327px;width:9px;height:9px;background:linear-gradient(#fff,#e4e4e4);border:1px solid #919191;border-radius:1px"></div>
<svg class="a" style="left:100px;top:327px" width="9" height="9" shape-rendering="crispEdges"><path d="M2 4.5H7M4.5 2V7" stroke="#2b3f8f" stroke-width="1" fill="none"/></svg>
<div class="a" style="left:118px;top:323px;width:11px;height:11px;background:#fff;border:1px solid #8e8f8f"></div>
<svg class="a" style="left:119px;top:324px" width="9" height="9" viewBox="0 0 9 9"><path d="M1.2 4.2 L3.4 6.6 L7.8 1.6" fill="none" stroke="#000" stroke-width="1.9"/></svg>
<span class="t " style="left:138.00px;top:322px;font-size:12px;line-height:17px;letter-spacing:-0.237px;color:#000">Ouvertures de cages</span>
<div class="a" style="left:697px;top:324px;width:11px;height:11px;background:#fff;border:1px solid #8e8f8f"></div>
<span class="t " style="left:742.80px;top:322px;font-size:12px;line-height:17px;letter-spacing:-0.294px;color:#000">Par vue</span>
<div class="a" style="left:100px;top:345px;width:9px;height:9px;background:linear-gradient(#fff,#e4e4e4);border:1px solid #919191;border-radius:1px"></div>
<svg class="a" style="left:100px;top:345px" width="9" height="9" shape-rendering="crispEdges"><path d="M2 4.5H7M4.5 2V7" stroke="#2b3f8f" stroke-width="1" fill="none"/></svg>
<div class="a" style="left:118px;top:341px;width:11px;height:11px;background:#fff;border:1px solid #8e8f8f"></div>
<svg class="a" style="left:119px;top:342px" width="9" height="9" viewBox="0 0 9 9"><path d="M1.2 4.2 L3.4 6.6 L7.8 1.6" fill="none" stroke="#000" stroke-width="1.9"/></svg>
<span class="t " style="left:138.00px;top:340px;font-size:12px;line-height:17px;letter-spacing:-0.170px;color:#000">Panneaux de murs-r...</span>
<div class="a" style="left:697px;top:342px;width:11px;height:11px;background:#fff;border:1px solid #8e8f8f"></div>
<span class="t " style="left:742.80px;top:340px;font-size:12px;line-height:17px;letter-spacing:-0.294px;color:#000">Par vue</span>
<div class="a" style="left:100px;top:363px;width:9px;height:9px;background:linear-gradient(#fff,#e4e4e4);border:1px solid #919191;border-radius:1px"></div>
<svg class="a" style="left:100px;top:363px" width="9" height="9" shape-rendering="crispEdges"><path d="M2 4.5H7M4.5 2V7" stroke="#2b3f8f" stroke-width="1" fill="none"/></svg>
<div class="a" style="left:118px;top:359px;width:11px;height:11px;background:#fff;border:1px solid #8e8f8f"></div>
<span class="t " style="left:138.00px;top:358px;font-size:12px;line-height:17px;letter-spacing:-0.170px;color:#000">Parking</span>
<div class="a" style="left:697px;top:360px;width:11px;height:11px;background:#fff;border:1px solid #8e8f8f"></div>
<span class="t " style="left:742.80px;top:358px;font-size:12px;line-height:17px;letter-spacing:-0.294px;color:#000">Par vue</span>
<div class="a" style="left:100px;top:381px;width:9px;height:9px;background:linear-gradient(#fff,#e4e4e4);border:1px solid #919191;border-radius:1px"></div>
<svg class="a" style="left:100px;top:381px" width="9" height="9" shape-rendering="crispEdges"><path d="M2 4.5H7" stroke="#2b3f8f" stroke-width="1" fill="none"/></svg>
<div class="a" style="left:118px;top:377px;width:11px;height:11px;background:#fff;border:1px solid #8e8f8f"></div>
<svg class="a" style="left:119px;top:378px" width="9" height="9" viewBox="0 0 9 9"><path d="M1.2 4.2 L3.4 6.6 L7.8 1.6" fill="none" stroke="#000" stroke-width="1.9"/></svg>
<div class="a" style="left:132px;top:375px;width:3px;height:17px;background:#fff"></div>
<div class="a" style="left:135px;top:375px;width:126px;height:17px;border:1px dotted #000;border-right:none"></div>
<span class="t " style="left:138.10px;top:376px;font-size:12px;line-height:17px;letter-spacing:-0.489px;color:#fff">Pièces</span>
<div class="a" style="left:425px;top:375px;width:81px;height:17px;background:#0078d7"></div>
<div class="a" style="left:426px;top:376px;width:80px;height:15px;background:#f0f0f0;border-top:1px solid #fff;border-left:1px solid #fff;border-right:1px solid #6d6d6d;border-bottom:1px solid #6d6d6d"></div>
<span class="t " style="left:432.80px;top:375px;font-size:12px;line-height:17px;letter-spacing:-0.205px;color:#000">Remplacer...</span>
<div class="a" style="left:696px;top:377px;width:13px;height:13px;background:#fff;border:1px solid #333"></div>
<div class="a" style="left:738px;top:375px;width:66px;height:17px;background:#fff;border:1px solid #0078d7"></div>
<span class="t " style="left:741.00px;top:376px;font-size:12px;line-height:17px;letter-spacing:-0.294px;color:#000">Par vue</span>
<div class="a" style="left:138px;top:395px;width:11px;height:11px;background:#fff;border:1px solid #8e8f8f"></div>
<svg class="a" style="left:139px;top:396px" width="9" height="9" viewBox="0 0 9 9"><path d="M1.2 4.2 L3.4 6.6 L7.8 1.6" fill="none" stroke="#000" stroke-width="1.9"/></svg>
<span class="t " style="left:157.80px;top:394px;font-size:12px;line-height:17px;letter-spacing:0.438px;color:#000">Motif/couleur</span>
<div class="a" style="left:138px;top:413px;width:11px;height:11px;background:#fff;border:1px solid #8e8f8f"></div>
<svg class="a" style="left:139px;top:414px" width="9" height="9" viewBox="0 0 9 9"><path d="M1.2 4.2 L3.4 6.6 L7.8 1.6" fill="none" stroke="#000" stroke-width="1.9"/></svg>
<span class="t " style="left:157.80px;top:412px;font-size:12px;line-height:17px;letter-spacing:-0.182px;color:#000">Remplissage int...</span>
<div class="a" style="left:138px;top:431px;width:11px;height:11px;background:#fff;border:1px solid #8e8f8f"></div>
<svg class="a" style="left:139px;top:432px" width="9" height="9" viewBox="0 0 9 9"><path d="M1.2 4.2 L3.4 6.6 L7.8 1.6" fill="none" stroke="#000" stroke-width="1.9"/></svg>
<span class="t " style="left:157.80px;top:430px;font-size:12px;line-height:17px;letter-spacing:-0.342px;color:#000">Référence</span>
<div class="a" style="left:100px;top:453px;width:9px;height:9px;background:linear-gradient(#fff,#e4e4e4);border:1px solid #919191;border-radius:1px"></div>
<svg class="a" style="left:100px;top:453px" width="9" height="9" shape-rendering="crispEdges"><path d="M2 4.5H7M4.5 2V7" stroke="#2b3f8f" stroke-width="1" fill="none"/></svg>
<div class="a" style="left:118px;top:449px;width:11px;height:11px;background:#fff;border:1px solid #8e8f8f"></div>
<svg class="a" style="left:119px;top:450px" width="9" height="9" viewBox="0 0 9 9"><path d="M1.2 4.2 L3.4 6.6 L7.8 1.6" fill="none" stroke="#000" stroke-width="1.9"/></svg>
<span class="t " style="left:138.00px;top:448px;font-size:12px;line-height:17px;letter-spacing:-0.075px;color:#000">Plafonds</span>
<div class="a" style="left:697px;top:450px;width:11px;height:11px;background:#fff;border:1px solid #8e8f8f"></div>
<span class="t " style="left:742.80px;top:448px;font-size:12px;line-height:17px;letter-spacing:-0.294px;color:#000">Par vue</span>
<div class="a" style="left:100px;top:471px;width:9px;height:9px;background:linear-gradient(#fff,#e4e4e4);border:1px solid #919191;border-radius:1px"></div>
<svg class="a" style="left:100px;top:471px" width="9" height="9" shape-rendering="crispEdges"><path d="M2 4.5H7M4.5 2V7" stroke="#2b3f8f" stroke-width="1" fill="none"/></svg>
<div class="a" style="left:118px;top:467px;width:11px;height:11px;background:#fff;border:1px solid #8e8f8f"></div>
<span class="t " style="left:138.00px;top:466px;font-size:12px;line-height:17px;letter-spacing:-0.304px;color:#000">Plantes</span>
<div class="a" style="left:697px;top:468px;width:11px;height:11px;background:#fff;border:1px solid #8e8f8f"></div>
<span class="t " style="left:742.80px;top:466px;font-size:12px;line-height:17px;letter-spacing:-0.294px;color:#000">Par vue</span>
<div class="a" style="left:100px;top:489px;width:9px;height:9px;background:linear-gradient(#fff,#e4e4e4);border:1px solid #919191;border-radius:1px"></div>
<svg class="a" style="left:100px;top:489px" width="9" height="9" shape-rendering="crispEdges"><path d="M2 4.5H7M4.5 2V7" stroke="#2b3f8f" stroke-width="1" fill="none"/></svg>
<div class="a" style="left:118px;top:485px;width:11px;height:11px;background:#fff;border:1px solid #8e8f8f"></div>
<svg class="a" style="left:119px;top:486px" width="9" height="9" viewBox="0 0 9 9"><path d="M1.2 4.2 L3.4 6.6 L7.8 1.6" fill="none" stroke="#000" stroke-width="1.9"/></svg>
<span class="t " style="left:138.00px;top:484px;font-size:12px;line-height:17px;letter-spacing:-0.298px;color:#000">Portes</span>
<div class="a" style="left:697px;top:486px;width:11px;height:11px;background:#fff;border:1px solid #8e8f8f"></div>
<span class="t " style="left:742.80px;top:484px;font-size:12px;line-height:17px;letter-spacing:-0.294px;color:#000">Par vue</span>
<div class="a" style="left:100px;top:507px;width:9px;height:9px;background:linear-gradient(#fff,#e4e4e4);border:1px solid #919191;border-radius:1px"></div>
<svg class="a" style="left:100px;top:507px" width="9" height="9" shape-rendering="crispEdges"><path d="M2 4.5H7M4.5 2V7" stroke="#2b3f8f" stroke-width="1" fill="none"/></svg>
<div class="a" style="left:118px;top:503px;width:11px;height:11px;background:#fff;border:1px solid #8e8f8f"></div>
<svg class="a" style="left:119px;top:504px" width="9" height="9" viewBox="0 0 9 9"><path d="M1.2 4.2 L3.4 6.6 L7.8 1.6" fill="none" stroke="#000" stroke-width="1.9"/></svg>
<span class="t " style="left:138.00px;top:502px;font-size:12px;line-height:17px;letter-spacing:-0.278px;color:#000">Poteaux</span>
<div class="a" style="left:697px;top:504px;width:11px;height:11px;background:#fff;border:1px solid #8e8f8f"></div>
<span class="t " style="left:742.80px;top:502px;font-size:12px;line-height:17px;letter-spacing:-0.294px;color:#000">Par vue</span>
<div class="a" style="left:100px;top:525px;width:9px;height:9px;background:linear-gradient(#fff,#e4e4e4);border:1px solid #919191;border-radius:1px"></div>
<svg class="a" style="left:100px;top:525px" width="9" height="9" shape-rendering="crispEdges"><path d="M2 4.5H7M4.5 2V7" stroke="#2b3f8f" stroke-width="1" fill="none"/></svg>
<div class="a" style="left:118px;top:521px;width:11px;height:11px;background:#fff;border:1px solid #8e8f8f"></div>
<svg class="a" style="left:119px;top:522px" width="9" height="9" viewBox="0 0 9 9"><path d="M1.2 4.2 L3.4 6.6 L7.8 1.6" fill="none" stroke="#000" stroke-width="1.9"/></svg>
<span class="t " style="left:138.00px;top:520px;font-size:12px;line-height:17px;letter-spacing:-0.162px;color:#000">Poteaux porteurs</span>
<div class="a" style="left:697px;top:522px;width:11px;height:11px;background:#fff;border:1px solid #8e8f8f"></div>
<span class="t " style="left:742.80px;top:520px;font-size:12px;line-height:17px;letter-spacing:-0.294px;color:#000">Par vue</span>
<div class="a" style="left:100px;top:543px;width:9px;height:9px;background:linear-gradient(#fff,#e4e4e4);border:1px solid #919191;border-radius:1px"></div>
<svg class="a" style="left:100px;top:543px" width="9" height="9" shape-rendering="crispEdges"><path d="M2 4.5H7M4.5 2V7" stroke="#2b3f8f" stroke-width="1" fill="none"/></svg>
<div class="a" style="left:118px;top:539px;width:11px;height:11px;background:#fff;border:1px solid #8e8f8f"></div>
<span class="t " style="left:138.00px;top:538px;font-size:12px;line-height:17px;letter-spacing:0.760px;color:#000">Publicité</span>
<div class="a" style="left:697px;top:540px;width:11px;height:11px;background:#fff;border:1px solid #8e8f8f"></div>
<span class="t " style="left:742.80px;top:538px;font-size:12px;line-height:17px;letter-spacing:-0.294px;color:#000">Par vue</span>
<div class="a" style="left:806px;top:227px;width:19px;height:316px;background:#fff"></div>
<div class="a" style="left:808px;top:227px;width:17px;height:316px;background:#f0f0f0"></div>
<div class="a" style="left:809px;top:375px;width:15px;height:99px;background:#cdcdcd"></div>
<svg class="a" style="left:812px;top:233px" width="9" height="6" viewBox="0 0 9 6"><path d="M0.8 5L4.5 1.3L8.2 5" stroke="#454545" stroke-width="1.9" fill="none"/></svg>
<svg class="a" style="left:812px;top:533px" width="9" height="6" viewBox="0 0 9 6"><path d="M0.8 1L4.5 4.7L8.2 1" stroke="#454545" stroke-width="1.9" fill="none"/></svg>
<div class="a" style="left:805px;top:266px;width:4px;height:1px;background:#696969"></div>
</div></div>
<div class="a" style="left:94px;top:225px;width:731px;height:318px;border-left:2px solid #696969;border-top:2px solid #696969;border-right:1px solid #e3e3e3;border-bottom:1px solid #e3e3e3"></div>
<div class="btn" style="left:95px;top:551px;width:88px;height:22px"></div>
<span class="t " style="left:125.70px;top:555px;font-size:11px;line-height:15px;letter-spacing:0.138px;color:#000"><u>T</u>ous</span>
<div class="btn" style="left:191px;top:551px;width:88px;height:22px"></div>
<span class="t " style="left:219.10px;top:555px;font-size:11px;line-height:15px;letter-spacing:-0.161px;color:#000">A<u>u</u>cun</span>
<div class="btn" style="left:287px;top:551px;width:88px;height:22px"></div>
<span class="t " style="left:308.80px;top:555px;font-size:11px;line-height:15px;letter-spacing:0.181px;color:#000"><u>I</u>nverser</span>
<div class="btn" style="left:383px;top:551px;width:88px;height:22px"></div>
<span class="t " style="left:385.60px;top:555px;font-size:11px;line-height:15px;letter-spacing:0.115px;color:#000">Tout dé<u>v</u>elopper</span>
<div class="a" style="left:97px;top:585px;width:383px;height:68px;border:1px solid #dcdcdc"></div>
<span class="t " style="left:114.80px;top:592px;font-size:11px;line-height:15px;letter-spacing:-0.118px;color:#000">Les catégories non remplacées sont tracées</span>
<span class="t " style="left:114.80px;top:605px;font-size:11px;line-height:15px;letter-spacing:-0.039px;color:#000">selon les paramètres de style d&#x27;objet.</span>
<div class="btn" style="left:354px;top:598px;width:108px;height:22px"></div>
<span class="t " style="left:365.80px;top:602px;font-size:11px;line-height:15px;letter-spacing:0.142px;color:#000"><u>S</u>tyles d&#x27;objets...</span>
<div class="a" style="left:491px;top:553px;width:335px;height:50px;border:1px solid #dcdcdc"></div>
<div class="a" style="left:496px;top:550px;width:145px;height:10px;background:#fff"></div>
<span class="t " style="left:498.70px;top:547px;font-size:11px;line-height:15px;letter-spacing:-0.189px;color:#000">Remplacer les couches hôtes</span>
<div class="a" style="left:502px;top:564px;width:13px;height:13px;background:#fff;border:1px solid #333"></div>
<span class="t " style="left:517.00px;top:563px;font-size:11px;line-height:15px;letter-spacing:-0.159px;color:#000">St<u>y</u>les de lignes de coupe</span>
<div class="btnd" style="left:707px;top:564px;width:108px;height:22px"></div>
<span class="t " style="left:734.80px;top:567px;font-size:11px;line-height:15px;letter-spacing:0.247px;color:#838383"><u>M</u>odifier...</span>
<div class="btn" style="left:523px;top:681px;width:73px;height:21px;border:2px solid #0078d7"></div>
<div class="btn" style="left:604px;top:681px;width:73px;height:21px"></div>
<div class="btnd" style="left:685px;top:681px;width:73px;height:21px"></div>
<div class="btn" style="left:766px;top:681px;width:73px;height:21px"></div>
<span class="t " style="left:550.80px;top:685px;font-size:11px;line-height:15px;letter-spacing:-0.503px;color:#000">OK</span>
<span class="t " style="left:621.10px;top:685px;font-size:11px;line-height:15px;letter-spacing:-0.146px;color:#000">Annuler</span>
<span class="t " style="left:698.30px;top:685px;font-size:11px;line-height:15px;letter-spacing:-0.187px;color:#838383"><u>A</u>ppliquer</span>
<span class="t " style="left:791.20px;top:685px;font-size:11px;line-height:15px;letter-spacing:-0.158px;color:#000">Aide</span>
<svg class="a" style="left:836px;top:700px" width="10" height="10"><rect x="8" y="0" width="2" height="2" fill="#bfbfbf"/><rect x="4" y="4" width="2" height="2" fill="#bfbfbf"/><rect x="8" y="4" width="2" height="2" fill="#bfbfbf"/><rect x="0" y="8" width="2" height="2" fill="#bfbfbf"/><rect x="4" y="8" width="2" height="2" fill="#bfbfbf"/><rect x="8" y="8" width="2" height="2" fill="#bfbfbf"/></svg>
</body></html>
